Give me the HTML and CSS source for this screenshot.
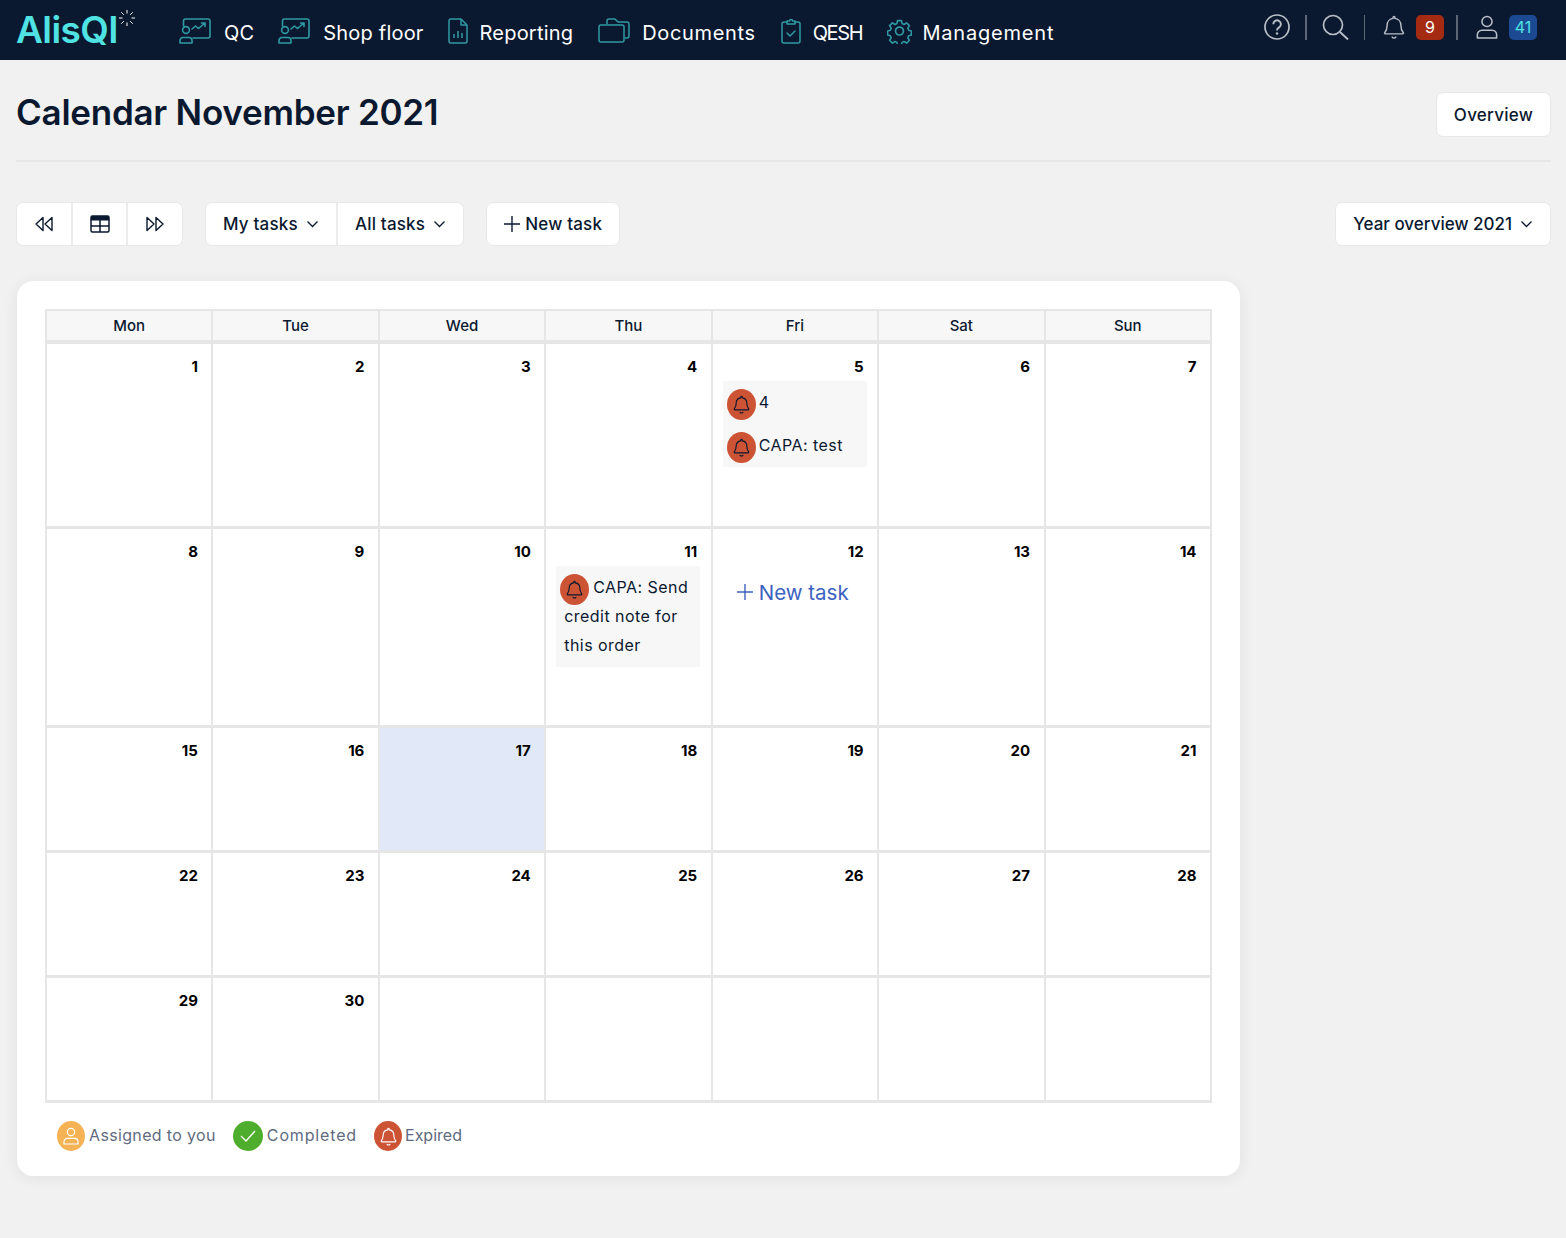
FILE: index.html
```html
<!DOCTYPE html>
<html lang="en">
<head>
<meta charset="utf-8">
<title>Calendar November 2021</title>
<link rel="stylesheet" href="styles.css">
</head>
<body>
<svg class="defs" width="0" height="0" aria-hidden="true">
  <symbol id="i-board" viewBox="0 0 32 26"><g fill="none" stroke="currentColor" stroke-width="1.600" stroke-linejoin="round" stroke-linecap="round"><path d="M4.500 8V3a2 2 0 0 1 2-2H29a2 2 0 0 1 2 2v15a2 2 0 0 1-2 2H14"/><circle cx="7" cy="12" r="3.400"/><path d="M1 25v-2.500a3 3 0 0 1 3-3h6a3 3 0 0 1 3 3V25z"/><path d="M13 11l3.500-3 3 2.500L26 5M22.500 5H26v3.500"/></g></symbol>
  <symbol id="i-report" viewBox="0 0 20 26"><g fill="none" stroke="currentColor" stroke-width="1.500" stroke-linejoin="round"><path d="M3 1h10l6 6v16a2 2 0 0 1-2 2H3a2 2 0 0 1-2-2V3a2 2 0 0 1 2-2z"/><path d="M13 1v6h6"/><path stroke-width="1.500" d="M6 20v-4M10 20v-7M14 20v-5"/></g></symbol>
  <symbol id="i-docs" viewBox="0 0 32 26"><g fill="none" stroke="currentColor" stroke-width="1.500" stroke-linejoin="round"><path d="M9 6V3a2 2 0 0 1 2-2h6l3 3h9a2 2 0 0 1 2 2v12a2 2 0 0 1-2 2h-2"/><path d="M3 7h21a2 2 0 0 1 2 2v13a2 2 0 0 1-2 2H3a2 2 0 0 1-2-2V9a2 2 0 0 1 2-2z"/></g></symbol>
  <symbol id="i-qesh" viewBox="0 0 20 26"><g fill="none" stroke="currentColor" stroke-width="1.500" stroke-linejoin="round" stroke-linecap="round"><path d="M6 4H3a2 2 0 0 0-2 2v17a2 2 0 0 0 2 2h14a2 2 0 0 0 2-2V6a2 2 0 0 0-2-2h-3"/><path d="M6 3h2.500a1.500 1.500 0 0 1 3 0H14v3H6z"/><path d="M6 15l3 3 5-5"/></g></symbol>
  <symbol id="i-gear" viewBox="0 0 24 24"><g fill="none" stroke="currentColor" stroke-width="1.600" stroke-linejoin="round"><circle cx="12" cy="12" r="3.800"/><path d="M10 1.500h4l.6 3 2 .9 2.600-1.600 2.800 2.800-1.600 2.600.9 2 2.700.8v4l-2.700.8-.9 2 1.600 2.600-2.800 2.800-2.600-1.600-2 .9-.6 2.800h-4l-.6-2.800-2-.9-2.600 1.600-2.800-2.800 1.600-2.600-.9-2-2.700-.8v-4l2.700-.8.900-2-1.600-2.600 2.800-2.800 2.600 1.600 2-.9z" transform="translate(.600 .600) scale(.95)"/></g></symbol>
  <symbol id="i-bell" viewBox="0 0 24 26"><g fill="none" stroke="currentColor" stroke-width="1.600" stroke-linecap="round" stroke-linejoin="round"><path d="M12 1.500a1 1 0 0 1 1 1v1.100a7.500 7.500 0 0 1 6.500 7.400c0 4 .8 6 2.600 8.200.5.600.1 1.300-.6 1.300H2.500c-.7 0-1.100-.7-.6-1.300C3.700 17 4.500 15 4.500 11A7.500 7.500 0 0 1 11 3.600V2.500a1 1 0 0 1 1-1z"/><path d="M10 24a2.500 2.500 0 0 0 4 0"/></g></symbol>
  <symbol id="i-user" viewBox="0 0 24 26"><g fill="none" stroke="currentColor" stroke-width="1.700" stroke-linejoin="round"><circle cx="12" cy="7" r="5.500"/><path d="M1.500 25v-3.500a5 5 0 0 1 5-5h11a5 5 0 0 1 5 5V25z"/></g></symbol>
  <symbol id="i-chev" viewBox="0 0 12 8"><path d="M1 1.500l5 5 5-5" fill="none" stroke="currentColor" stroke-width="1.300"/></symbol>
  <symbol id="i-plus" viewBox="0 0 16 16"><path d="M8 0v16M0 8h16" fill="none" stroke="currentColor" stroke-width="1.400"/></symbol>
</svg>

<header class="topbar">
  <a class="logo">AlisQI<svg class="spark" viewBox="0 0 16 16" width="16" height="16"><path d="M8 0v3.500M8 12.500V16M0 8h3.500M12.500 8H16M2.300 2.300l2.500 2.500M11.200 11.200l2.500 2.500M2.300 13.700l2.500-2.500M11.200 4.800l2.500-2.500" stroke="#fff" stroke-width="1" fill="none"/></svg></a>
  <nav class="nav">
    <a class="nav-item nav-item-wide"><svg class="nav-icon w32"><use href="#i-board"/></svg><span>QC</span></a>
    <a class="nav-item nav-item-wide"><svg class="nav-icon w32"><use href="#i-board"/></svg><span>Shop floor</span></a>
    <a class="nav-item"><svg class="nav-icon w20"><use href="#i-report"/></svg><span>Reporting</span></a>
    <a class="nav-item"><svg class="nav-icon w32"><use href="#i-docs"/></svg><span class="sp-docs">Documents</span></a>
    <a class="nav-item"><svg class="nav-icon w20"><use href="#i-qesh"/></svg><span class="sp-qesh">QESH</span></a>
    <a class="nav-item nav-item-tight"><svg class="nav-icon w25"><use href="#i-gear"/></svg><span class="sp-mgmt">Management</span></a>
  </nav>
  <div class="tools">
    <svg class="tool-help" viewBox="0 0 26 26" width="26" height="26"><circle cx="13" cy="13" r="12" fill="none" stroke="currentColor" stroke-width="1.700"/><path d="M9.300 10.200a3.800 3.800 0 1 1 5.800 3.200c-1.300.8-2.100 1.500-2.100 3" fill="none" stroke="currentColor" stroke-width="1.900"/><circle cx="13" cy="19.500" r="1.200" fill="currentColor"/></svg>
    <i class="sep sep-a"></i>
    <svg class="tool-search" viewBox="0 0 27 26" width="27" height="26"><circle cx="11" cy="11" r="9.500" fill="none" stroke="currentColor" stroke-width="1.700"/><path d="M18 18l8 7.500" stroke="currentColor" stroke-width="1.900" fill="none"/></svg>
    <i class="sep sep-b"></i>
    <svg class="tool-bell"><use href="#i-bell"/></svg>
    <b class="badge badge-red">9</b>
    <i class="sep sep-c"></i>
    <svg class="tool-user"><use href="#i-user"/></svg>
    <b class="badge badge-blue">41</b>
  </div>
</header>

<main class="page">
  <div class="page-head">
    <h1>Calendar November 2021</h1>
    <a class="btn btn-tall">Overview</a>
  </div>

  <div class="toolbar">
    <div class="group">
      <a class="btn-cell cell-nav"><svg viewBox="0 0 20 16" width="20" height="16"><path d="M9 1.500L2 8l7 6.500zM18 1.500L11 8l7 6.500z" fill="none" stroke="currentColor" stroke-width="1.400" stroke-linejoin="round"/></svg></a>
      <a class="btn-cell cell-nav"><svg viewBox="0 0 20 18" width="20" height="18"><rect x="1" y="1" width="18" height="16" rx="1.500" fill="none" stroke="currentColor" stroke-width="1.500"/><rect x="1" y="1" width="18" height="4.500" fill="currentColor"/><path d="M1 11h18M10 5v12" stroke="currentColor" stroke-width="1.500"/></svg></a>
      <a class="btn-cell cell-nav"><svg viewBox="0 0 20 16" width="20" height="16"><path d="M2 1.500L9 8l-7 6.500zM11 1.500L18 8l-7 6.500z" fill="none" stroke="currentColor" stroke-width="1.400" stroke-linejoin="round"/></svg></a>
    </div>
    <div class="group group-sp">
      <a class="btn-cell">My tasks<svg class="chev"><use href="#i-chev"/></svg></a>
      <a class="btn-cell">All tasks<svg class="chev"><use href="#i-chev"/></svg></a>
    </div>
    <div class="group group-sp">
      <a class="btn-cell cell-new"><svg class="plus"><use href="#i-plus"/></svg>New task</a>
    </div>
    <div class="group group-end">
      <a class="btn-cell">Year overview 2021<svg class="chev"><use href="#i-chev"/></svg></a>
    </div>
  </div>

  <section class="card">
    <table class="cal">
      <thead>
        <tr><th>Mon</th><th>Tue</th><th>Wed</th><th>Thu</th><th>Fri</th><th>Sat</th><th>Sun</th></tr>
      </thead>
      <tbody>
        <tr class="r1">
          <td><span class="d">1</span></td><td><span class="d">2</span></td><td><span class="d">3</span></td><td><span class="d">4</span></td>
          <td><span class="d">5</span>
            <div class="tasks">
              <p><span class="dot dot-exp"><svg class="bell-s"><use href="#i-bell"/></svg></span>4</p>
              <p><span class="dot dot-exp"><svg class="bell-s"><use href="#i-bell"/></svg></span>CAPA: test</p>
            </div>
          </td>
          <td><span class="d">6</span></td><td><span class="d">7</span></td>
        </tr>
        <tr class="r2">
          <td><span class="d">8</span></td><td><span class="d">9</span></td><td><span class="d">10</span></td>
          <td><span class="d">11</span>
            <div class="tasks tasks-wrap">
              <p><span class="dot dot-exp"><svg class="bell-s"><use href="#i-bell"/></svg></span>CAPA: Send credit note for this order</p>
            </div>
          </td>
          <td><span class="d">12</span><a class="add"><svg class="add-plus"><use href="#i-plus"/></svg>New task</a></td>
          <td><span class="d">13</span></td><td><span class="d">14</span></td>
        </tr>
        <tr class="r3">
          <td><span class="d">15</span></td><td><span class="d">16</span></td><td class="today"><span class="d">17</span></td><td><span class="d">18</span></td><td><span class="d">19</span></td><td><span class="d">20</span></td><td><span class="d">21</span></td>
        </tr>
        <tr class="r3">
          <td><span class="d">22</span></td><td><span class="d">23</span></td><td><span class="d">24</span></td><td><span class="d">25</span></td><td><span class="d">26</span></td><td><span class="d">27</span></td><td><span class="d">28</span></td>
        </tr>
        <tr class="r3">
          <td><span class="d">29</span></td><td><span class="d">30</span></td><td></td><td></td><td></td><td></td><td></td>
        </tr>
      </tbody>
    </table>
    <div class="legend">
      <span class="lg lg-you"><span class="dot dot-you"><svg class="lg-icon"><use href="#i-user"/></svg></span>Assigned to you</span>
      <span class="lg lg-done"><span class="dot dot-done"><svg class="lg-icon" viewBox="0 0 16 12"><path d="M1 6l5 5 9-10" fill="none" stroke="currentColor" stroke-width="1.300"/></svg></span>Completed</span>
      <span class="lg lg-exp"><span class="dot dot-exp"><svg class="lg-icon lg-bell"><use href="#i-bell"/></svg></span>Expired</span>
    </div>
  </section>
</main>
</body>
</html>
```
FILE: styles.css
```css
* { box-sizing: border-box; }
html, body { margin: 0; height: 1238px; overflow: hidden; }
body { background: #f1f1f1; color: #0b1930; font-family: "Inter", "Liberation Sans", sans-serif; }
.defs { position: absolute; }
a { color: inherit; text-decoration: none; }

.topbar { height: 60px; background: #0b1930; display: flex; align-items: center; padding-left: 16px; color: #fff; }
.logo { display: flex; align-items: flex-start; width: 163px; font-size: 37px; font-weight: 600; letter-spacing: -.6px; color: #4fe3e3; line-height: 62px; }
.spark { margin: 11px 0 0 1px; }
.nav { display: flex; align-items: center; padding-top: 6px; }
.nav-item { display: flex; align-items: center; gap: 12px; margin-right: 25px; font-size: 20px; font-weight: 400; letter-spacing: .2px; }
.nav-item-wide { gap: 13px; margin-right: 24px; }
.nav-item-tight { gap: 10px; }
.sp-docs { letter-spacing: .65px; }
.sp-qesh { letter-spacing: -1.300px; }
.sp-mgmt { letter-spacing: .8px; }
.nav-icon { height: 26px; color: #2f9aa3; margin-top: -5px; }
.w32 { width: 32px; }
.w20 { width: 20px; }
.w25 { width: 25px; }
.tools { display: flex; align-items: center; margin-left: auto; padding-right: 29px; color: #b9bec6; padding-bottom: 6px; }
.sep { width: 2px; height: 25px; background: #5b6676; }
.sep-a { margin: 0 15px; }
.sep-b { margin: 0 18px 0 15px; width: 1px; }
.sep-c { margin: 0 18px 0 12px; }
.tool-bell { width: 22px; height: 26px; }
.tool-user { width: 22px; height: 26px; }
.badge { width: 28px; height: 25px; margin-left: 11px; border-radius: 5px; display: flex; align-items: center; justify-content: center; font-size: 16px; font-weight: 400; }
.badge-red { background: #a52a12; color: #fff; }
.badge-blue { background: #1b4a93; color: #4fe3e3; }

.page { padding: 32px 15px 0 16px; }
.page-head { display: flex; justify-content: space-between; align-items: flex-start; height: 70px; border-bottom: 2px solid #e6e6e6; }
h1 { margin: 0; font-size: 35px; line-height: 40px; font-weight: 600; letter-spacing: -.25px; color: #0b1930; }
.btn { background: #fff; border: 1px solid #e8e8e8; border-radius: 7px; font-size: 17px; font-weight: 500; letter-spacing: .25px; display: flex; align-items: center; }
.btn-tall { height: 45px; padding: 0 17px; }

.toolbar { display: flex; gap: 22px; margin-top: 40px; }
.group { display: flex; height: 44px; background: #fff; border: 1px solid #e8e8e8; border-radius: 7px; }
.group-sp { letter-spacing: .2px; }
.group-end { margin-left: auto; }
.btn-cell { display: flex; align-items: center; padding: 0 17px; font-size: 17px; font-weight: 500; white-space: nowrap; }
.btn-cell + .btn-cell { border-left: 2px solid #ececec; }
.cell-nav { width: 55px; padding: 0; justify-content: center; }
.cell-nav:first-child { width: 54px; }
.cell-nav:last-child { width: 56px; }
.chev { width: 13px; height: 8px; margin-left: 8px; }
.plus { width: 16px; height: 16px; margin-right: 5px; }
.cell-new { padding: 0 17px; }

.card { width: 1223px; height: 895px; margin: 35px 0 0 1px; padding: 28px 28px 0; background: #fff; border-radius: 16px; box-shadow: 0 2px 16px rgba(0, 0, 0, .07); }
.cal { width: 1167px; table-layout: fixed; border-collapse: collapse; border: 2px solid #e6e6e6; }
.cal th { height: 32px; padding: 0; background: #f7f7f7; border: 2px solid #e6e6e6; border-bottom-width: 4px; font-size: 15px; font-weight: 500; color: #0b1930; text-align: center; }
.cal td { padding: 13px 13.500px 0 10px; vertical-align: top; border-style: solid; border-color: #e6e6e6; border-width: 3px 2px; }
.r1 td { height: 185px; }
.r2 td { height: 199px; }
.r3 td { height: 125px; }
.today { background: #e1e9f8; }
.d { display: block; text-align: right; font-size: 15px; line-height: 20px; font-weight: 700; color: #000; }
.tasks { margin: 4px -3px 0 0; padding: 7px 4px; background: #f7f7f7; font-size: 16px; line-height: 29px; letter-spacing: .45px; color: #0b1930; }
.tasks p { margin: 0 0 14px; }
.tasks p:last-child { margin: 0; }
.tasks-wrap { padding: 7px 6px 7px 8px; }
.dot { display: inline-flex; align-items: center; justify-content: center; width: 29px; height: 31px; border-radius: 50%; vertical-align: middle; margin: -2px 3px -4px 0; }
.tasks-wrap .dot { margin-left: -4px; margin-right: 4px; }
.dot-exp { background: #cd5335; }
.dot-you { background: #f5b355; width: 28px; }
.dot-done { background: #4fad2d; width: 30px; }
.bell-s { width: 17px; height: 19px; color: #0b1930; }
.add { display: flex; align-items: center; margin: 18px 0 0 14px; color: #3d62c0; font-size: 20.500px; }
.add-plus { width: 16px; height: 16px; margin-right: 6px; }

.legend { display: flex; gap: 17px; padding: 17px 0 0 12px; color: #5f6b80; font-size: 16px; line-height: 30px; }
.lg-you { letter-spacing: .35px; }
.lg-done { letter-spacing: .85px; }
.lg-icon { width: 16px; height: 12px; color: #fff; }
.dot-you .lg-icon { height: 18px; width: 16px; }
.lg-bell { height: 19px; width: 17px; }
.legend .dot { height: 30px; margin: 0 4px 0 0; }
.legend .dot-exp { width: 28px; margin-right: 3px; }
```
